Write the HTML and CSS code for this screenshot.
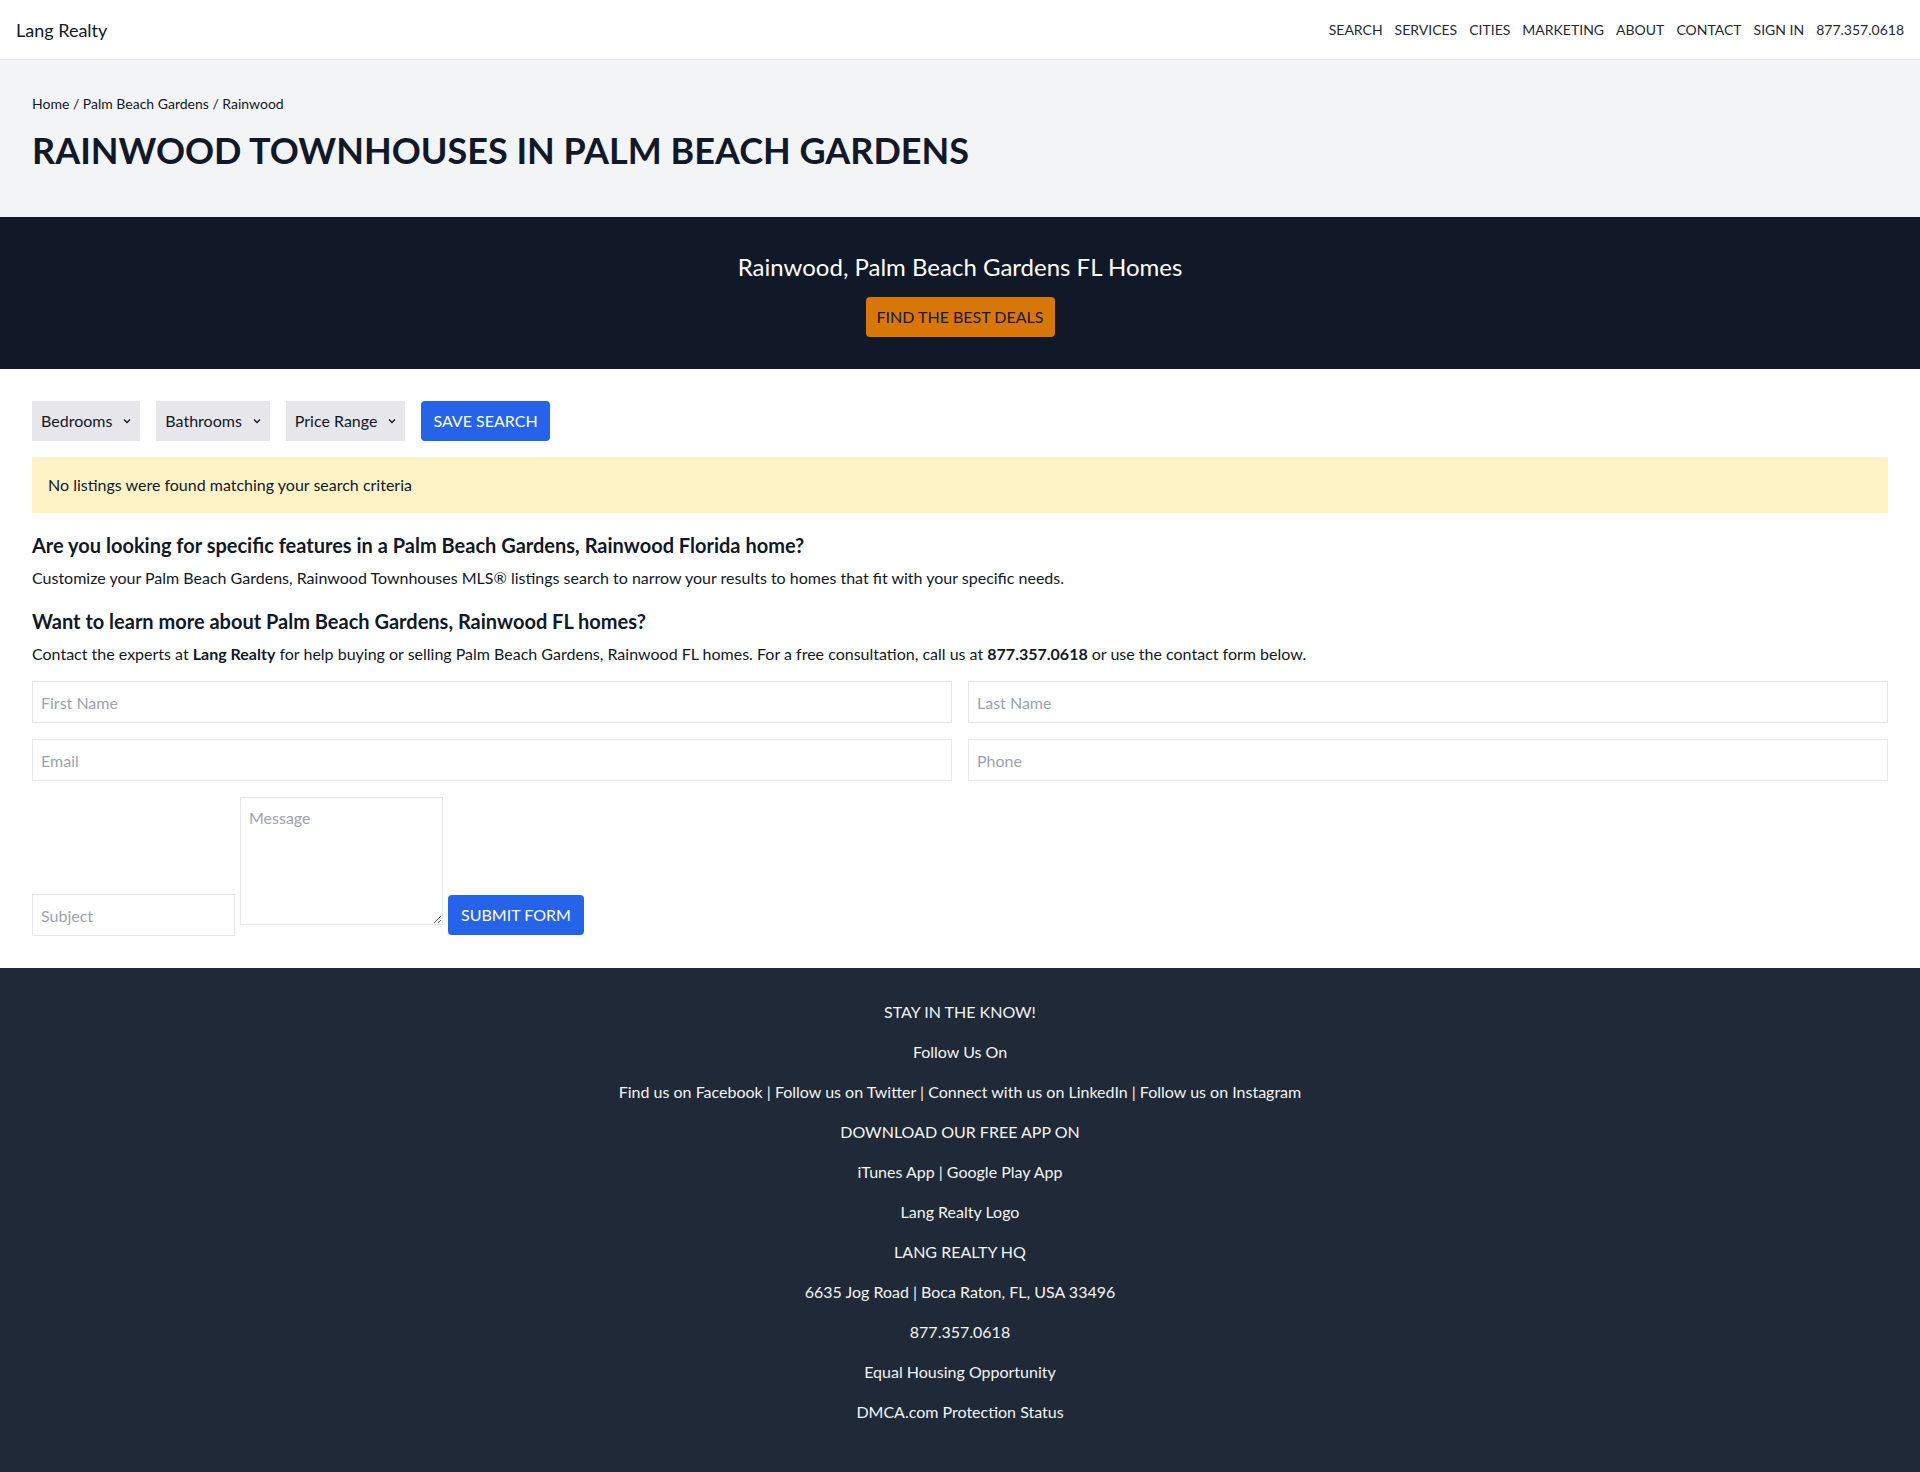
FILE: index.html
```html
<!DOCTYPE html>
<html lang="en">
<head>
<meta charset="utf-8">
<title>Rainwood Townhouses in Palm Beach Gardens</title>
<link rel="stylesheet" href="styles.css">
</head>
<body>
<header class="nav">
  <a class="logo" href="#">Lang Realty</a>
  <nav class="nav-links">
    <a href="#">SEARCH</a>
    <a href="#">SERVICES</a>
    <a href="#">CITIES</a>
    <a href="#">MARKETING</a>
    <a href="#">ABOUT</a>
    <a href="#">CONTACT</a>
    <a href="#">SIGN IN</a>
    <a href="#">877.357.0618</a>
  </nav>
</header>

<section class="page-head">
  <div class="breadcrumb"><a href="#">Home</a> / <a href="#">Palm Beach Gardens</a> / <a href="#">Rainwood</a></div>
  <h1 class="title">RAINWOOD TOWNHOUSES IN PALM BEACH GARDENS</h1>
</section>

<section class="hero">
  <h2 class="hero-title">Rainwood, Palm Beach Gardens FL Homes</h2>
  <a class="btn-amber" href="#">FIND THE BEST DEALS</a>
</section>

<main class="content">
  <div class="filters">
    <div class="select">Bedrooms <svg class="chev" width="10" height="10" viewBox="0 0 10 10"><path d="M2 3.5 L5 6.5 L8 3.5" fill="none" stroke="#111827" stroke-width="1.3"/></svg></div>
    <div class="select">Bathrooms <svg class="chev" width="10" height="10" viewBox="0 0 10 10"><path d="M2 3.5 L5 6.5 L8 3.5" fill="none" stroke="#111827" stroke-width="1.3"/></svg></div>
    <div class="select">Price Range <svg class="chev" width="10" height="10" viewBox="0 0 10 10"><path d="M2 3.5 L5 6.5 L8 3.5" fill="none" stroke="#111827" stroke-width="1.3"/></svg></div>
    <button class="btn-blue save" type="button">SAVE SEARCH</button>
  </div>

  <div class="alert">No listings were found matching your search criteria</div>

  <h3 class="sub">Are you looking for specific features in a Palm Beach Gardens, Rainwood Florida home?</h3>
  <p class="text">Customize your Palm Beach Gardens, Rainwood Townhouses MLS® listings search to narrow your results to homes that fit with your specific needs.</p>

  <h3 class="sub">Want to learn more about Palm Beach Gardens, Rainwood FL homes?</h3>
  <p class="text">Contact the experts at <strong>Lang Realty</strong> for help buying or selling Palm Beach Gardens, Rainwood FL homes. For a free consultation, call us at <strong>877.357.0618</strong> or use the contact form below.</p>

  <form class="form">
    <div class="grid">
      <input class="field" type="text" placeholder="First Name">
      <input class="field" type="text" placeholder="Last Name">
      <input class="field" type="email" placeholder="Email">
      <input class="field" type="tel" placeholder="Phone">
    </div>
    <div class="row3">
      <input class="field subject" type="text" placeholder="Subject">
      <textarea class="message" placeholder="Message"></textarea>
      <button class="btn-blue submit" type="button">SUBMIT FORM</button>
    </div>
  </form>
</main>

<footer class="footer">
  <p>STAY IN THE KNOW!</p>
  <p>Follow Us On</p>
  <p>Find us on Facebook | Follow us on Twitter | Connect with us on LinkedIn | Follow us on Instagram</p>
  <p>DOWNLOAD OUR FREE APP ON</p>
  <p>iTunes App | Google Play App</p>
  <p>Lang Realty Logo</p>
  <p>LANG REALTY HQ</p>
  <p>6635 Jog Road | Boca Raton, FL, USA 33496</p>
  <p>877.357.0618</p>
  <p>Equal Housing Opportunity</p>
  <p>DMCA.com Protection Status</p>
</footer>
</body>
</html>
```

FILE: styles.css
```css
* { box-sizing: border-box; }
html, body { margin: 0; padding: 0; }
body {
  font-family: Lato, "Open Sans", sans-serif;
  color: #111827;
  font-size: 16px;
  line-height: 24px;
  background: #fff;
}
a { color: inherit; text-decoration: none; }

.nav {
  height: 60px;
  display: flex;
  align-items: center;
  justify-content: space-between;
  padding: 0 16px;
  border-bottom: 1px solid #e5e7eb;
}
.logo { font-size: 18px; line-height: 28px; color: #111827; }
.nav-links { display: flex; gap: 12px; font-size: 14px; line-height: 20px; color: #1f2937; }

.page-head {
  background: #f3f4f6;
  padding: 34px 32px 47px;
}
.breadcrumb { font-size: 14px; line-height: 20px; }
.title {
  margin: 16px 0 0;
  font-size: 36px;
  line-height: 40px;
  font-weight: 700;
}

.hero {
  background: #111827;
  text-align: center;
  padding: 34px 0 32px;
}
.hero-title {
  margin: 0 0 14px;
  color: #fff;
  font-size: 24px;
  line-height: 32px;
  font-weight: 400;
}
.btn-amber {
  display: inline-block;
  background: #d97706;
  color: #111827;
  padding: 8px 11px;
  line-height: 24px;
  border-radius: 4px;
}

.content { padding: 32px 32px 32px; }
.filters { display: flex; gap: 16px; align-items: center; }
.select {
  height: 40px;
  display: flex;
  align-items: center;
  gap: 10px;
  padding: 0 8px 0 9px;
  background: #e7e7eb;
  color: #111827;
}
.chev { display: block; }
.btn-blue {
  font-family: inherit;
  font-size: 16px;
  line-height: 24px;
  height: 40px;
  padding: 8px 13px;
  border: 0;
  border-radius: 4px;
  background: #2563eb;
  color: #fff;
}
.save { padding: 8px 12px; }

.alert {
  margin-top: 16px;
  background: #fef3c7;
  padding: 16px;
}
.sub {
  margin: 18px 0 7px;
  font-size: 20px;
  line-height: 28px;
  font-weight: 700;
}
.text { margin: 0; }
.text + .sub { margin-top: 17px; }

.form { margin-top: 15px; }
.grid {
  display: grid;
  grid-template-columns: 1fr 1fr;
  gap: 16px;
}
.field {
  height: 42px;
  padding: 8px;
  border: 1px solid #e5e7eb;
  font-family: inherit;
  font-size: 16px;
  line-height: 24px;
  color: #111827;
  background: #fff;
  outline: none;
}
.field::placeholder, .message::placeholder { color: #9ca3af; }
.row3 {
  margin-top: 16px;
  display: flex;
  align-items: flex-end;
  gap: 5px;
}
.subject { width: 203px; }
.message {
  width: 203px;
  height: 128px;
  margin-bottom: 11px;
  padding: 8px;
  border: 1px solid #e5e7eb;
  font-family: inherit;
  font-size: 16px;
  line-height: 24px;
  outline: none;
}
.submit { margin-bottom: 1px; }

.footer {
  background: #1f2937;
  color: #f3f4f6;
  text-align: center;
  padding: 32px 0 32px;
}
.footer p { margin: 0 0 16px; line-height: 24px; }
```
